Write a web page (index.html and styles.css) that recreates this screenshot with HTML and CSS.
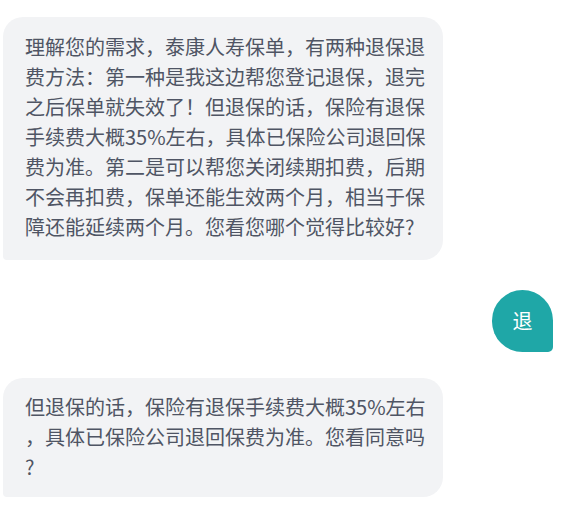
FILE: index.html
```html
<!DOCTYPE html>
<html lang="zh-CN">
<head>
<meta charset="utf-8">
<link rel="stylesheet" href="styles.css">
</head>
<body>
<div class="chat">
  <div class="msg msg-left">
    <div class="bubble-in bubble-long">理解您的需求，泰康人寿保单，有两种退保退<br>费方法：第一种是我这边帮您登记退保，退完<br>之后保单就失效了！但退保的话，保险有退保<br>手续费大概35%左右，具体已保险公司退回保<br>费为准。第二是可以帮您关闭续期扣费，后期<br>不会再扣费，保单还能生效两个月，相当于保<br>障还能延续两个月。您看您哪个觉得比较好?</div>
  </div>
  <div class="msg msg-right">
    <div class="bubble-out">退</div>
  </div>
  <div class="msg msg-left msg-last">
    <div class="bubble-in bubble-short">但退保的话，保险有退保手续费大概35%左右<br>，具体已保险公司退回保费为准。您看同意吗<br>?</div>
  </div>
</div>
</body>
</html>
```
FILE: styles.css
```css
html, body {
  margin: 0;
  padding: 0;
  background: #ffffff;
}
body {
  font-family: "Noto Sans CJK SC", "Noto Sans", sans-serif;
  font-size: 20px;
  line-height: 30px;
}
.chat {
  display: flex;
  flex-direction: column;
  padding: 17px 21px 0 3px;
}
.msg {
  display: flex;
}
.msg-left {
  justify-content: flex-start;
}
.msg-right {
  justify-content: flex-end;
  margin-top: 30px;
}
.msg-last {
  margin-top: 26px;
}
.bubble-in {
  width: 440px;
  box-sizing: border-box;
  padding: 15px 18px 16px 22px;
  background: #f2f3f5;
  color: #4f5564;
  border-radius: 20px 20px 20px 4px;
  white-space: nowrap;
}
.bubble-long {
  padding-bottom: 18px;
}
.bubble-short {
  padding-top: 14px;
  padding-bottom: 15px;
}
.bubble-out {
  width: 61px;
  height: 62px;
  display: flex;
  align-items: center;
  justify-content: center;
  background: #1fa7a7;
  color: #ffffff;
  border-radius: 31px 31px 5px 31px;
}
```
